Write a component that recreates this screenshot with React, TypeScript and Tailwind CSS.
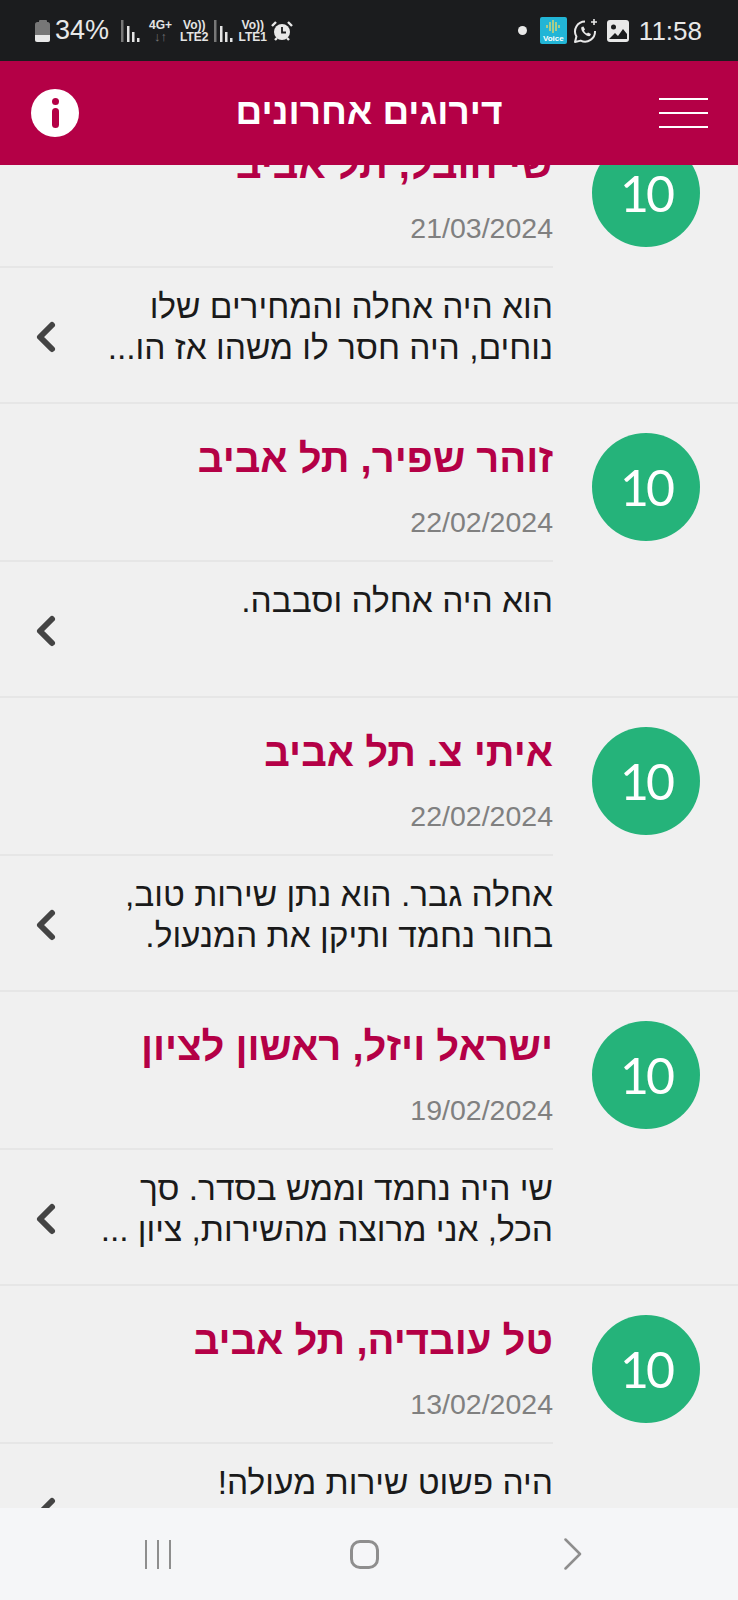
import { ChevronLeft } from 'lucide-react'

const reviews = [
  { name: 'שי חובל, תל אביב', date: '21/03/2024', lines: ['הוא היה אחלה והמחירים שלו', 'נוחים, היה חסר לו משהו אז הו...'] },
  { name: 'זוהר שפיר, תל אביב', date: '22/02/2024', lines: ['הוא היה אחלה וסבבה.'] },
  { name: 'איתי צ. תל אביב', date: '22/02/2024', lines: ['אחלה גבר. הוא נתן שירות טוב,', 'בחור נחמד ותיקן את המנעול.'] },
  { name: 'ישראל ויזל, ראשון לציון', date: '19/02/2024', lines: ['שי היה נחמד וממש בסדר. סך', 'הכל, אני מרוצה מהשירות, ציון ...'] },
  { name: 'טל עובדיה, תל אביב', date: '13/02/2024', lines: ['היה פשוט שירות מעולה!'] },
]

function Signal() {
  return (
    <svg width="19" height="24" viewBox="0 0 19 24" className="text-[#e4e4e4]">
      <rect x="0" y="1" width="2.500" height="22" fill="#777" />
      <rect x="6" y="7" width="2.500" height="16" fill="currentColor" />
      <rect x="11" y="13" width="2.500" height="10" fill="currentColor" />
      <rect x="16" y="19" width="2.500" height="4" fill="currentColor" />
    </svg>
  )
}

function Lte({ n }: { n: string }) {
  return (
    <div className="flex flex-col items-center text-[12px] leading-[12px] font-bold text-[#e4e4e4]">
      <span>Vo))</span>
      <span>LTE{n}</span>
    </div>
  )
}

function StatusBar() {
  return (
    <div dir="ltr" className="h-[61px] shrink-0 bg-[#1b1c1e] flex items-center justify-between pl-[35px] pr-[36px] text-[#e8e8e8] pt-[16px] pb-[16px]">
      <div className="flex items-center">
        <svg width="16" height="22" viewBox="0 0 16 22">
          <rect x="4" y="0" width="8" height="3" rx="1" fill="#777" />
          <rect x="0" y="2" width="15" height="20" rx="2.5" fill="#777" />
          <path d="M0 15h15v4.5a2.5 2.5 0 0 1-2.5 2.5h-10A2.5 2.5 0 0 1 0 19.5z" fill="#e8e8e8" />
        </svg>
        <span className="text-[27px] leading-none ml-[4px]">34%</span>
        <div className="ml-[12px]"><Signal /></div>
        <div className="ml-[9px] flex flex-col items-center text-[12px] leading-[12px] font-bold text-[#e4e4e4]">
          <span>4G+</span>
          <span className="text-[#777] text-[13px] leading-[11px]">↓↑</span>
        </div>
        <div className="ml-[8px]"><Lte n="2" /></div>
        <div className="ml-[5px]"><Signal /></div>
        <div className="ml-[6px]"><Lte n="1" /></div>
        <svg width="22" height="22" viewBox="0 0 22 22" className="ml-[4px]">
          <circle cx="11" cy="12" r="8" fill="#e8e8e8" />
          <path d="M11 7v5.500h4" stroke="#1b1c1e" strokeWidth="1.8" fill="none" />
          <path d="M1 6l4-4M21 6l-4-4M4 20l2-2M18 20l-2-2" stroke="#e8e8e8" strokeWidth="2.4" />
        </svg>
      </div>
      <div className="flex items-center">
        <span className="w-[9px] h-[9px] rounded-full bg-[#e8e8e8]" />
        <div className="ml-[13px] w-[27px] h-[27px] rounded-[2px] bg-[#22b5d6] flex flex-col items-center justify-end overflow-hidden">
          <svg width="14" height="13" viewBox="0 0 14 13" className="mb-[1px]">
            <path d="M1 5v3M4 2v9M7 0v13M10 2v9M13 5v3" stroke="#e4d86a" strokeWidth="1.4" />
          </svg>
          <span className="text-[8px] leading-[10px] text-white font-bold">Voice</span>
        </div>
        <svg width="26" height="26" viewBox="0 0 26 26" className="ml-[6px]" fill="none">
          <path d="M12 3.500a10 10 0 0 0-8.600 15L2 24l5.700-1.400A10 10 0 0 0 22 13" stroke="#e8e8e8" strokeWidth="2" strokeLinejoin="round" />
          <path d="M8.500 9c-1 2 .5 4.500 2.500 6.500s4.500 3 6 2.500l1-2-3-1.500-1 1c-1.500-.5-2.500-1.500-3-3l1-1-1.500-3z" fill="#e8e8e8" />
          <path d="M21 1v6M18 4h6" stroke="#e8e8e8" strokeWidth="1.6" />
        </svg>
        <svg width="22" height="22" viewBox="0 0 22 22" className="ml-[8px]">
          <rect width="22" height="22" rx="3" fill="#e8e8e8" />
          <circle cx="6.500" cy="7" r="2.500" fill="#1b1c1e" />
          <path d="M2 19l6-6 3 3 5-7 4 5v5z" fill="#1b1c1e" />
        </svg>
        <span className="text-[26px] leading-none ml-[10px]">11:58</span>
      </div>
    </div>
  )
}

function Header() {
  return (
    <header dir="ltr" className="relative z-10 h-[104px] shrink-0 bg-[#b40046] flex items-center justify-between pl-[31px] pr-[30px]">
      <div className="w-[48px] h-[48px] rounded-full bg-white flex flex-col items-center justify-center">
        <span className="w-[7px] h-[7px] rounded-full bg-[#b40046]" />
        <span className="w-[7px] h-[20px] rounded-full bg-[#b40046] mt-[3px]" />
      </div>
      <h1 dir="rtl" className="text-[37px] font-bold text-white leading-none -mt-[4px]">דירוגים אחרונים</h1>
      <div className="w-[49px] flex flex-col gap-[12px]">
        <span className="h-[2px] bg-white" />
        <span className="h-[2px] bg-white" />
        <span className="h-[2px] bg-white" />
      </div>
    </header>
  )
}

function ReviewRow({ name, date, lines }: { name: string; date: string; lines: string[] }) {
  return (
    <div className="h-[294px] shrink-0 border-b-2 border-[#e6e6e6] flex">
      <div className="w-[185px] shrink-0 pt-[29px] pr-[38px]">
        <div className="w-[108px] h-[108px] rounded-full bg-[#25b37a] flex items-center justify-center text-white text-[50px] tracking-[-3px] font-['Lato',sans-serif]">
          10
        </div>
      </div>
      <div className="flex-1 flex flex-col">
        <div className="h-[158px] border-b-2 border-[#e6e6e6] pt-[30px]">
          <h2 className="text-[40px] leading-[48px] font-bold text-[#b40046]">{name}</h2>
          <p dir="ltr" className="text-right mt-[22px] text-[28.500px] leading-[36px] text-[#808080]">{date}</p>
        </div>
        <div className="flex items-start justify-between pt-[18px]">
          <div className="text-[33.500px] leading-[41px] text-[#1a1a1a]">
            {lines.map((l) => (
              <p key={l}>{l}</p>
            ))}
          </div>
          <ChevronLeft size={48} strokeWidth={3} className="text-[#444] ml-[22px] mt-[27px]" />
        </div>
      </div>
    </div>
  )
}

function NavBar() {
  return (
    <div dir="ltr" className="absolute bottom-0 left-0 right-0 z-10 h-[92px] bg-[#f5f6f8] flex items-center justify-between pl-[145px] pr-[164px]">
      <div className="flex gap-[10px]">
        <span className="w-[2px] h-[29px] bg-[#8e8e8e]" />
        <span className="w-[2px] h-[29px] bg-[#8e8e8e]" />
        <span className="w-[2px] h-[29px] bg-[#8e8e8e]" />
      </div>
      <div className="mr-[6px] w-[29px] h-[29px] rounded-[10px] border-[3px] border-[#8e8e8e]" />
      <svg width="18" height="32" viewBox="0 0 18 32" fill="none" className="mr-[-8px]">
        <path d="M1.500 1.500L16 16 1.500 30.500" stroke="#8e8e8e" strokeWidth="2.500" strokeLinecap="round" strokeLinejoin="round" />
      </svg>
    </div>
  )
}

export default function App() {
  return (
    <div dir="rtl" className="relative h-[1600px] w-full overflow-hidden bg-[#f0f0f0] flex flex-col font-['Liberation_Sans',sans-serif]">
      <StatusBar />
      <Header />
      <div className="-mt-[55px] flex flex-col">
        {reviews.map((r) => (
          <ReviewRow key={r.date + r.name} {...r} />
        ))}
      </div>
      <NavBar />
    </div>
  )
}
